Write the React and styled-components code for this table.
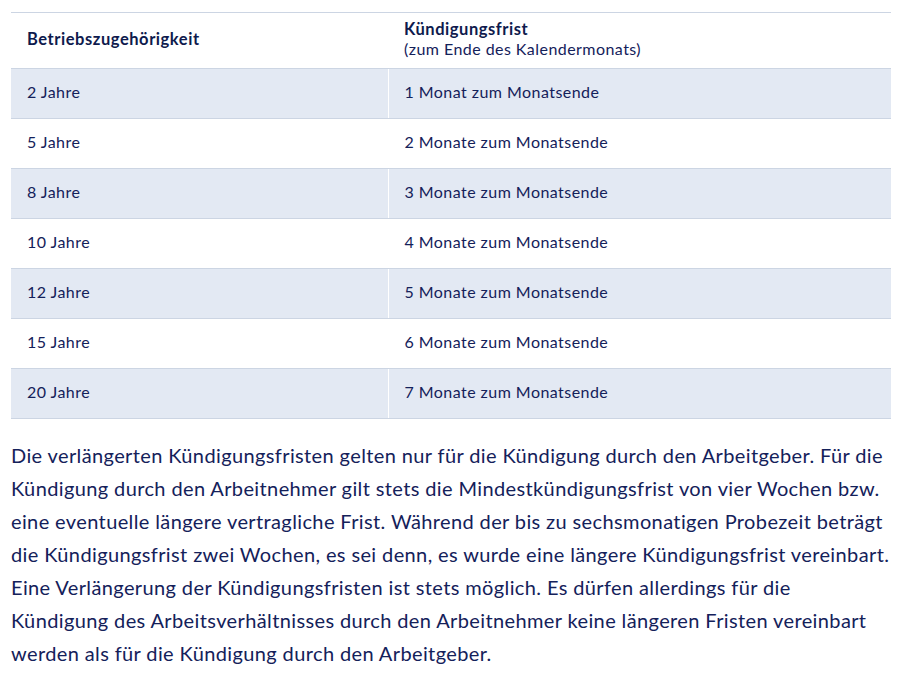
import React from "react";
import styled, { createGlobalStyle } from "styled-components";

const rows = [
  ["2 Jahre", "1 Monat zum Monatsende"],
  ["5 Jahre", "2 Monate zum Monatsende"],
  ["8 Jahre", "3 Monate zum Monatsende"],
  ["10 Jahre", "4 Monate zum Monatsende"],
  ["12 Jahre", "5 Monate zum Monatsende"],
  ["15 Jahre", "6 Monate zum Monatsende"],
  ["20 Jahre", "7 Monate zum Monatsende"],
];

const lines = [
  "Die verlängerten Kündigungsfristen gelten nur für die Kündigung durch den Arbeitgeber. Für die",
  "Kündigung durch den Arbeitnehmer gilt stets die Mindestkündigungsfrist von vier Wochen bzw.",
  "eine eventuelle längere vertragliche Frist. Während der bis zu sechsmonatigen Probezeit beträgt",
  "die Kündigungsfrist zwei Wochen, es sei denn, es wurde eine längere Kündigungsfrist vereinbart.",
  "Eine Verlängerung der Kündigungsfristen ist stets möglich. Es dürfen allerdings für die",
  "Kündigung des Arbeitsverhältnisses durch den Arbeitnehmer keine längeren Fristen vereinbart",
  "werden als für die Kündigung durch den Arbeitgeber.",
];

function App() {
  return (
    <>
      <GlobalStyle />
      <Page>
        <Table>
          <thead>
            <tr>
              <HeadCell>
                <strong>Betriebszugehörigkeit</strong>
              </HeadCell>
              <HeadCell>
                <strong>Kündigungsfrist</strong>
                <br />
                (zum Ende des Kalendermonats)
              </HeadCell>
            </tr>
          </thead>
          <tbody>
            {rows.map((row, index) => (
              <Row key={index} shaded={index % 2 === 0}>
                <Cell>{row[0]}</Cell>
                <Cell>{row[1]}</Cell>
              </Row>
            ))}
          </tbody>
        </Table>
        <Text>
          {lines.map((line, index) => (
            <React.Fragment key={index}>
              {line}
              {index < lines.length - 1 && <br />}
            </React.Fragment>
          ))}
        </Text>
      </Page>
    </>
  );
}

export default App;

const GlobalStyle = createGlobalStyle`
  body {
    margin: 0;
    background: #ffffff;
    font-family: Lato, "Open Sans", sans-serif;
    color: #14215a;
  }
`;

const Page = styled.div`
  padding: 12px 7px 0 11px;
`;

const Table = styled.table`
  width: 880px;
  border-collapse: collapse;
  border-top: 1px solid #ccd5e3;
  table-layout: fixed;
  font-size: 16px;
  letter-spacing: 0.45px;
`;

const HeadCell = styled.th`
  text-align: left;
  vertical-align: middle;
  font-weight: 400;
  padding: 6px 16px 9px;
  line-height: 20px;
  height: 40px;
  border-bottom: 1px solid #ccd5e3;
  &:first-child {
    width: 345px;
  }
  strong {
    font-weight: 700;
    font-size: 16.5px;
    letter-spacing: 0.55px;
    color: #0e1a4d;
  }
`;

const Row = styled.tr`
  background: ${(props) => (props.shaded ? "#e3e9f3" : "#ffffff")};
`;

const Cell = styled.td`
  height: 50px;
  padding: 0 16px 3px;
  box-sizing: border-box;
  border-bottom: 1px solid #ccd5e3;
  line-height: 20px;
  &:first-child {
    border-right: 1px solid #ffffff;
  }
`;

const Text = styled.p`
  margin: 20px 0 0;
  font-size: 20px;
  letter-spacing: 0.38px;
  line-height: 33px;
  color: #14215a;
`;
